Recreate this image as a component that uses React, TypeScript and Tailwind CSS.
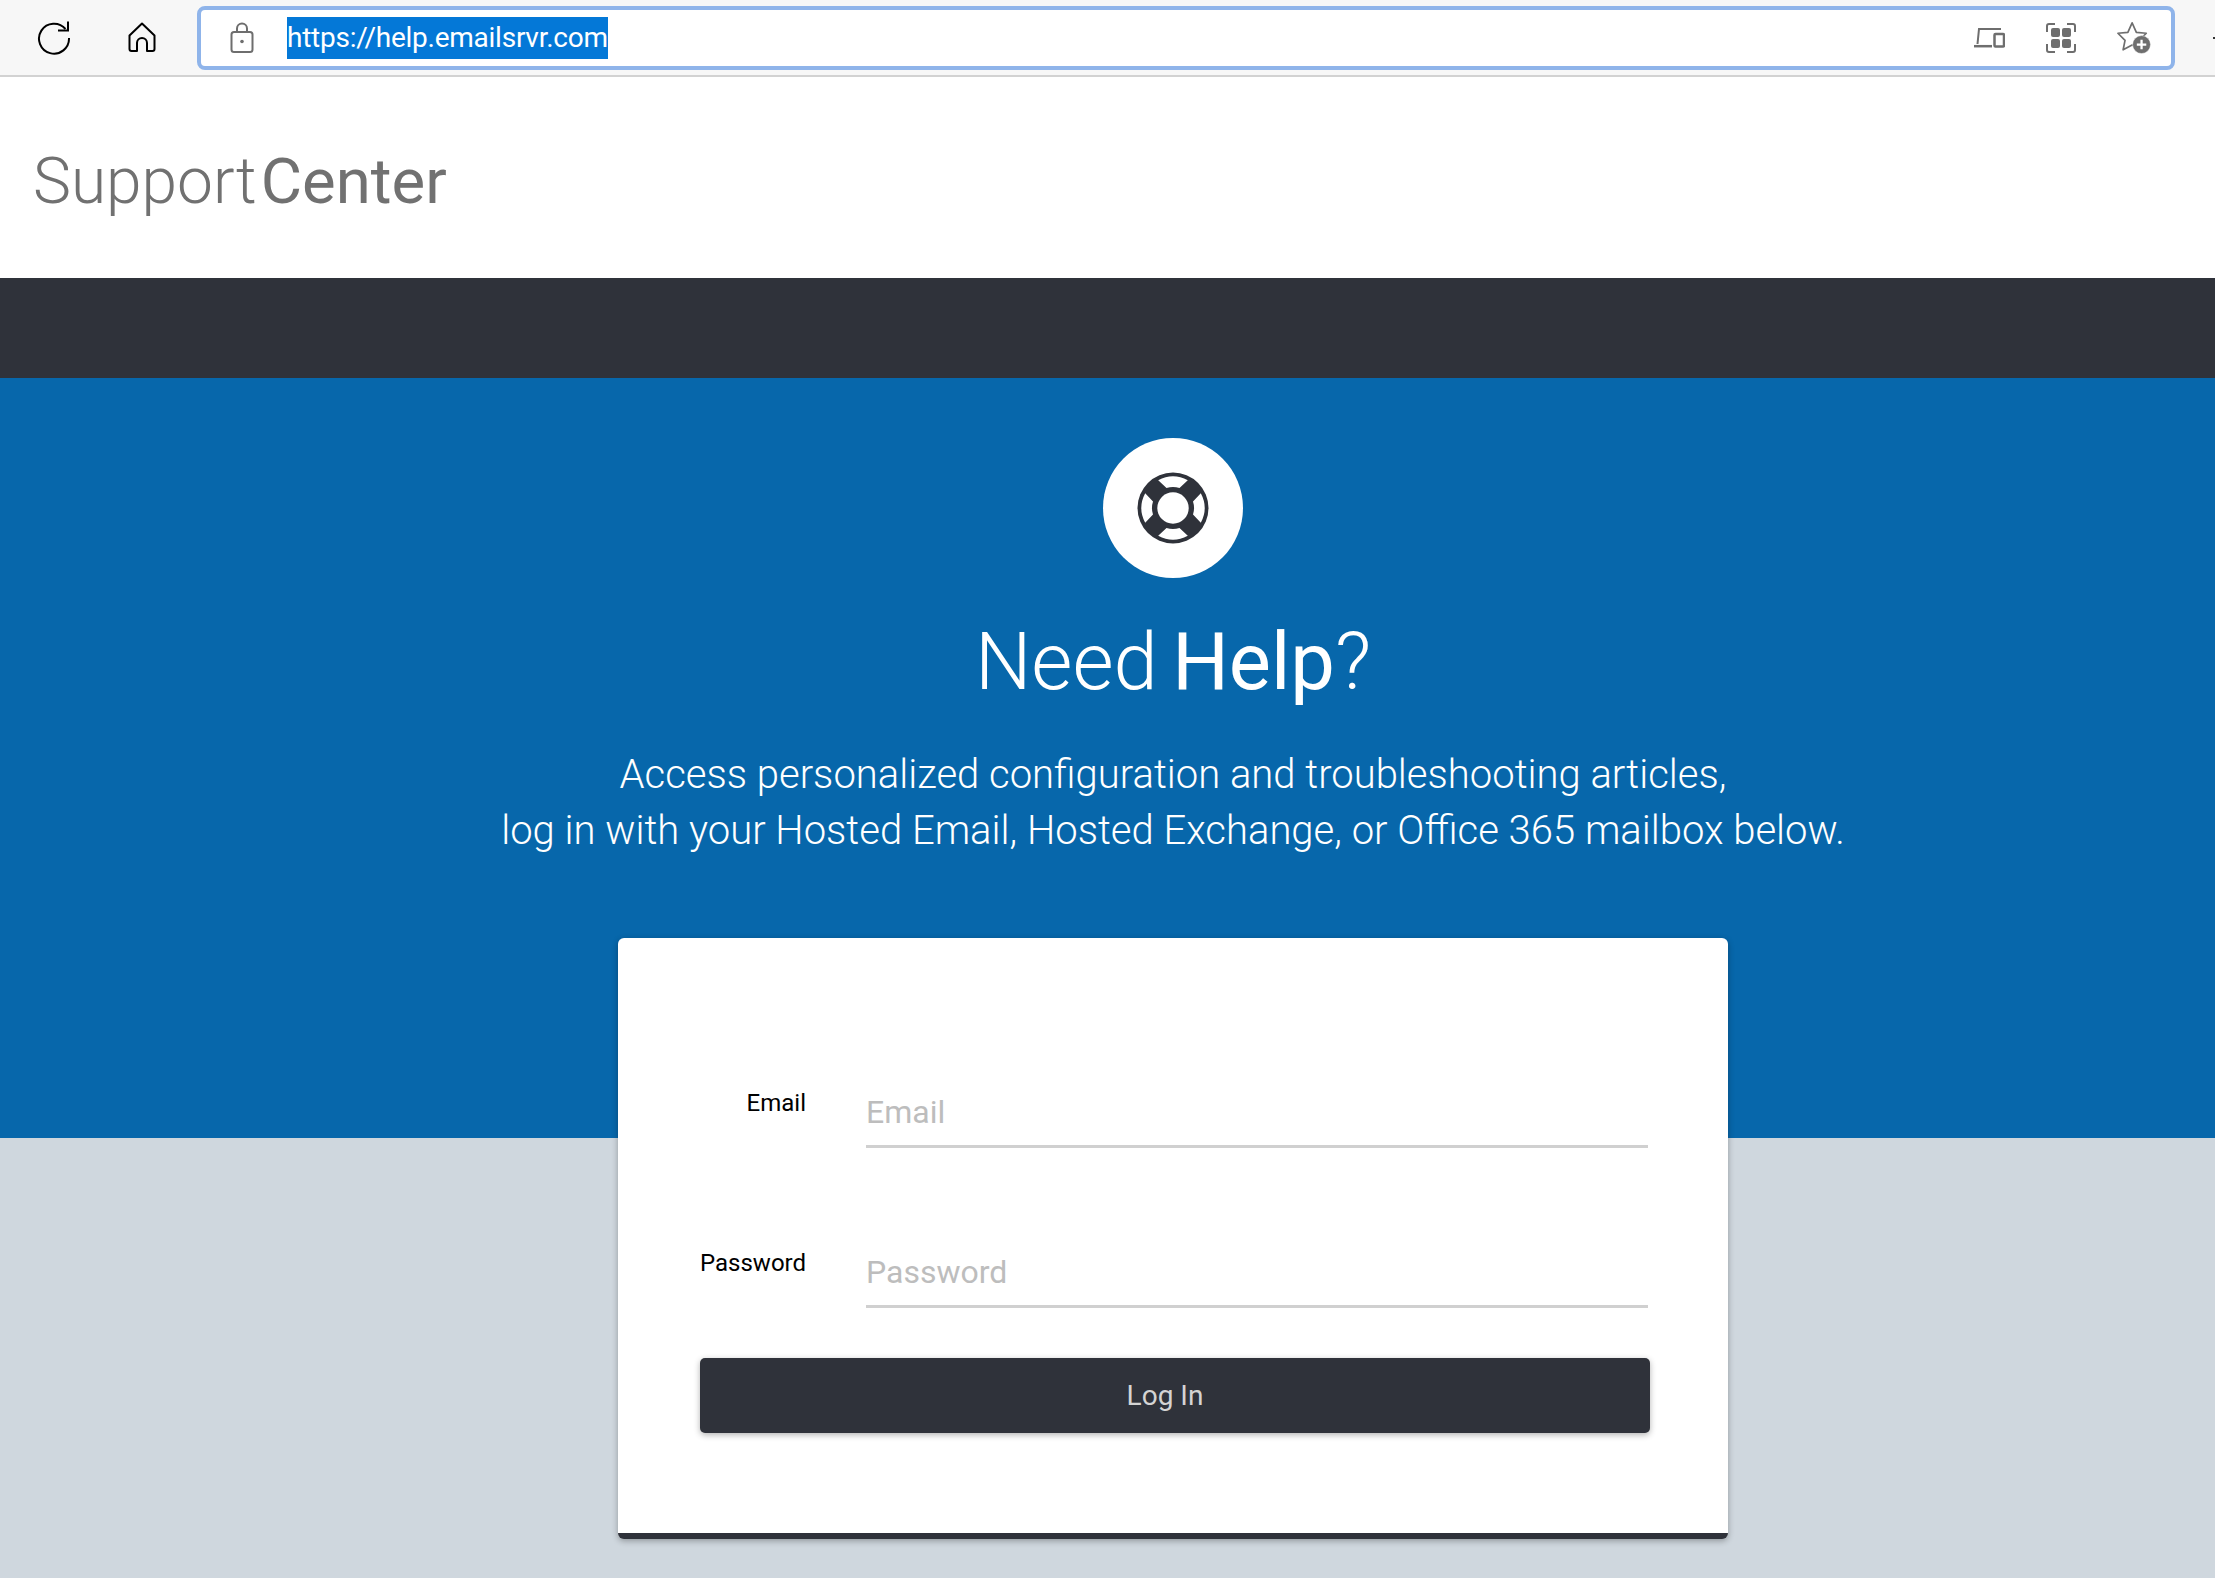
function ReloadIcon() {
  return (
    <svg width="36" height="36" viewBox="0 0 36 36" fill="none" stroke="#000" strokeWidth="2">
      <path d="M29.500 9A15 15 0 1 0 33 18" />
      <path d="M32 1.500V10.500H22" />
    </svg>
  );
}

function HomeIcon() {
  return (
    <svg width="28" height="31" viewBox="0 0 28 31" fill="none" stroke="#000" strokeWidth="2">
      <path
        d="M14 1.500 1.500 13.500V27a2 2 0 0 0 2 2H9V21a5 5 0 0 1 10 0v8h5.500a2 2 0 0 0 2-2V13.500z"
        strokeLinejoin="round"
      />
    </svg>
  );
}

function LockIcon() {
  return (
    <svg width="24" height="32" viewBox="0 0 24 32" fill="none" stroke="#6e6e6e" strokeWidth="2">
      <path d="M7 10V6.500a5 5 0 0 1 10 0V10" />
      <rect x="1.500" y="10" width="21" height="20" rx="2.500" />
      <circle cx="12" cy="19.500" r="1.800" fill="#6e6e6e" stroke="none" />
    </svg>
  );
}

function DevicesIcon() {
  return (
    <svg width="31" height="20" viewBox="0 0 31 20" fill="none" stroke="#6e6e6e" strokeWidth="2">
      <path d="M27 1H5L3.500 16" />
      <path d="M0 18.200h18" strokeWidth="2.500" />
      <rect x="20.500" y="6" width="9.500" height="12.500" rx="1" strokeWidth="2.500" />
    </svg>
  );
}

function AppsIcon() {
  return (
    <svg width="30" height="30" viewBox="0 0 30 30" fill="none">
      <path
        d="M1 9V3a2 2 0 0 1 2-2h6M21 1h6a2 2 0 0 1 2 2v6M29 21v6a2 2 0 0 1-2 2h-6M9 29H3a2 2 0 0 1-2-2v-6"
        stroke="#6e6e6e"
        strokeWidth="2"
      />
      <rect x="5" y="5" width="9" height="9" rx="2" fill="#6e6e6e" />
      <rect x="16" y="5" width="9" height="9" rx="2" fill="#6e6e6e" />
      <rect x="5" y="16" width="9" height="9" rx="2" fill="#6e6e6e" />
      <rect x="16" y="16" width="9" height="9" rx="2" fill="#6e6e6e" />
    </svg>
  );
}

function StarPlusIcon() {
  return (
    <svg width="34" height="33" viewBox="0 0 36 34" fill="none">
      <path
        d="M16 1.500 20.500 11.500 31 12.500 23.500 20 25.500 30 16 25 6.500 30 8.500 20 1 12.500 11.500 11.500z"
        stroke="#6e6e6e"
        strokeWidth="1.800"
        strokeLinejoin="round"
      />
      <circle cx="26" cy="24.500" r="9.500" fill="#6e6e6e" stroke="#fff" strokeWidth="0.500" />
      <path d="M26 19.500v10M21 24.500h10" stroke="#fff" strokeWidth="2.400" />
    </svg>
  );
}

function LifeRingIcon() {
  const segment = 'M21.200 8.200A31.500 31.500 0 0 1 50.800 8.200L42.500 16A21 21 0 0 0 29.500 16Z';
  return (
    <svg width="72" height="72" viewBox="0 0 72 72">
      <circle cx="36" cy="36" r="35.500" fill="#2f323a" />
      <circle cx="36" cy="36" r="15.700" fill="#fff" />
      {[0, 90, 180, 270].map((angle) => (
        <path key={angle} d={segment} fill="#fff" transform={`rotate(${angle} 36 36)`} />
      ))}
    </svg>
  );
}

function BrowserBar() {
  return (
    <div className="flex h-[77px] shrink-0 items-center border-b-2 border-[#d2d2d2] bg-[#f7f7f7]">
      <div className="ml-[36px] flex w-[36px] justify-center">
        <ReloadIcon />
      </div>
      <div className="ml-[56px] flex w-[28px] justify-center">
        <HomeIcon />
      </div>
      <div className="ml-[41px] flex h-[64px] w-[1978px] items-center rounded-[8px] border-[4px] border-[#8fb4ea] bg-white pl-[29px] pr-[20px]">
        <LockIcon />
        <span className="ml-[33px] flex h-[42px] items-center bg-[#0478d7] text-[28px] tracking-[-0.25px] text-white">
          https://help.emailsrvr.com
        </span>
        <div className="ml-auto flex items-center gap-[41px]">
          <DevicesIcon />
          <AppsIcon />
          <StarPlusIcon />
        </div>
      </div>
      <div className="ml-auto h-[2px] w-[2px] bg-[#333]" />
    </div>
  );
}

function Field({ label }: { label: string }) {
  return (
    <div className="flex h-[160px] items-start">
      <label className="w-[106px] pt-[4px] text-right text-[24px] leading-[34px] text-black">{label}</label>
      <input
        placeholder={label}
        readOnly
        className="ml-[60px] mt-[6px] h-[60px] w-[782px] border-b-[3px] border-[#d0d0d0] bg-transparent pb-[9px] text-[32px] outline-none placeholder:text-[#bdbdbd]"
      />
    </div>
  );
}

export default function App() {
  return (
    <div className="flex min-h-screen flex-col bg-[#cfd7de] font-['Roboto',sans-serif]">
      <BrowserBar />

      {/* Logo */}
      <div className="flex h-[201px] shrink-0 items-center bg-white pl-[33px] pt-[8px] text-[64px] font-light text-[#717171]">
        <span>Support</span>
        <span className="ml-[4px] text-[63.5px] font-normal">Center</span>
      </div>
      <div className="h-[100px] shrink-0 bg-[#2f323a]" />

      <div className="flex h-[760px] shrink-0 flex-col items-center bg-[#0767ab] pl-[131px] pt-[60px] text-white">
        <div className="flex h-[140px] w-[140px] items-center justify-center rounded-full bg-white">
          <LifeRingIcon />
        </div>
        <h1 className="mt-[36px] text-[79.5px] font-light leading-[96px] [word-spacing:-5px]">
          Need <span className="font-normal">Help</span>?
        </h1>
        <p className="mt-[37px] text-center text-[40px] font-light leading-[56px]">
          Access personalized configuration and troubleshooting articles,
          <br />
          log in with your Hosted Email, Hosted Exchange, or Office 365 mailbox below.
        </p>
      </div>

      {/* Login card */}
      <div className="relative ml-[618px] -mt-[200px] h-[601px] w-[1110px] rounded-[6px] border-b-[6px] border-[#2f323a] bg-white pl-[82px] pt-[144px] shadow-[0_2px_6px_rgba(0,0,0,0.3)]">
        <Field label="Email" />
        <Field label="Password" />
        <button className="-mt-[44px] flex h-[75px] w-[950px] items-center justify-center rounded-[5px] bg-[#2f323a] pr-[20px] text-[28px] font-normal text-[#d4d4d4] shadow-[0_2px_6px_rgba(0,0,0,0.3)]">
          Log In
        </button>
      </div>
    </div>
  );
}
